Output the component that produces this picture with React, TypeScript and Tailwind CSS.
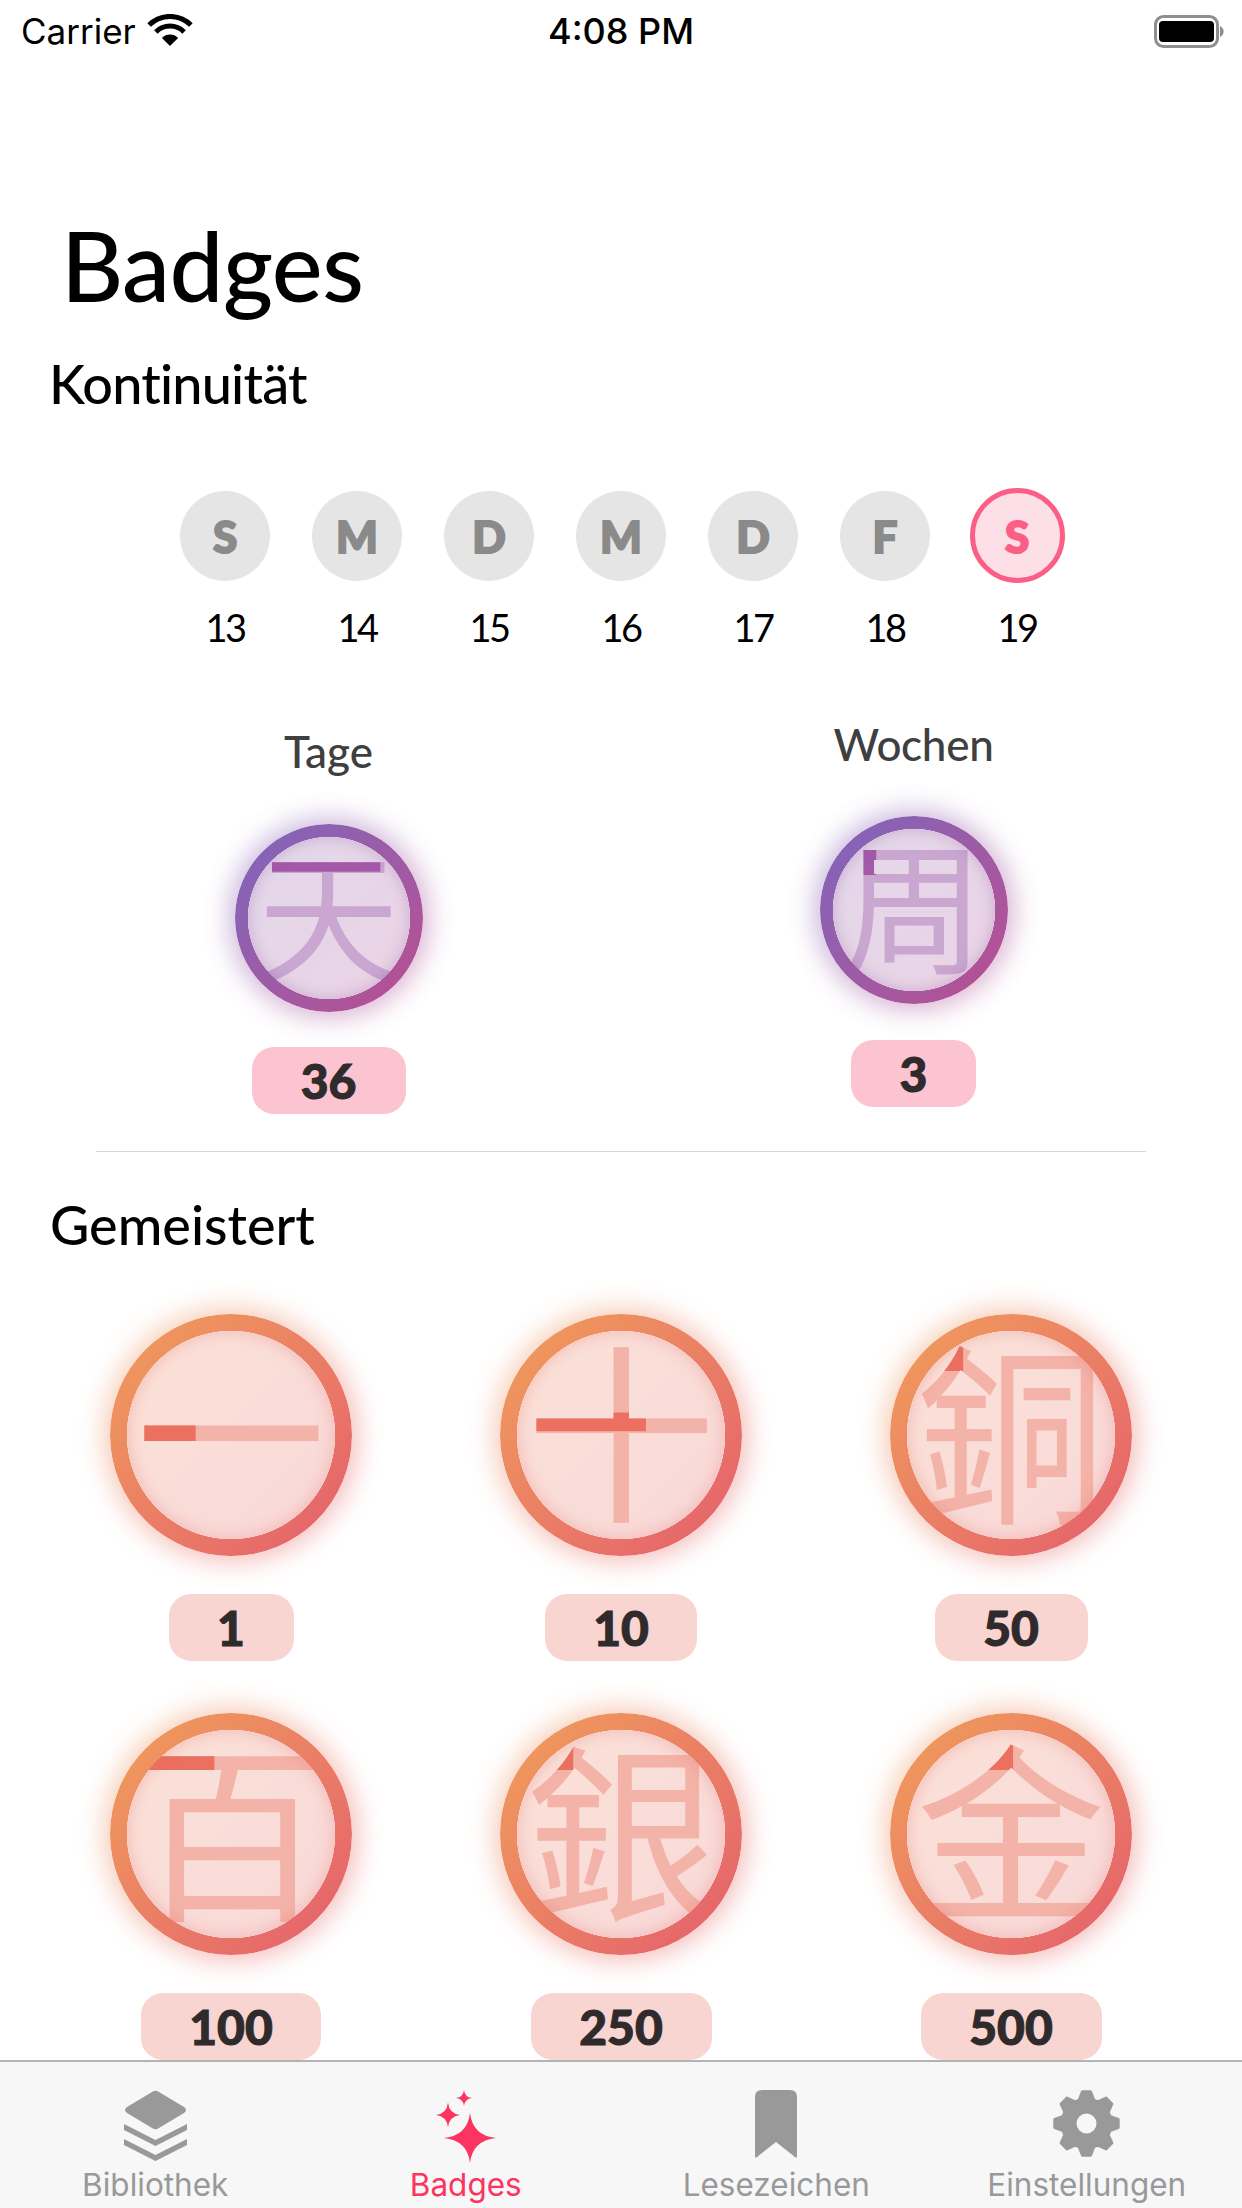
import React from 'react';

const days = [
  { letter: 'S', date: 13 },
  { letter: 'M', date: 14 },
  { letter: 'D', date: 15 },
  { letter: 'M', date: 16 },
  { letter: 'D', date: 17 },
  { letter: 'F', date: 18 },
  { letter: 'S', date: 19, today: true },
];

const mastered = [
  { glyph: '一', count: '1', pill: 'w-[125px]', first: '[clip-path:polygon(0_0,33%_0,33%_100%,0_100%)]' },
  { glyph: '十', count: '10', pill: 'w-[152px]', first: '[clip-path:polygon(0_44%,62%_44%,62%_53%,0_53%)]' },
  { glyph: '銅', count: '50', pill: 'w-[153px]', first: '[clip-path:polygon(10%_0,27%_0,27%_24%,10%_24%)]' },
  { glyph: '百', count: '100', pill: 'w-[180px]', first: '[clip-path:polygon(0_0,42%_0,42%_25%,0_25%)]' },
  { glyph: '銀', count: '250', pill: 'w-[181px]', first: '[clip-path:polygon(10%_0,27%_0,27%_24%,10%_24%)]' },
  { glyph: '金', count: '500', pill: 'w-[181px]', first: '[clip-path:polygon(30%_0,51%_0,51%_24%,30%_24%)]' },
];

function sparkle(cx: number, cy: number, rx: number, ry: number) {
  const kx = rx * 0.1;
  const ky = ry * 0.1;
  return `M${cx} ${cy - ry}Q${cx + kx} ${cy - ky} ${cx + rx} ${cy}Q${cx + kx} ${cy + ky} ${cx} ${cy + ry}Q${cx - kx} ${cy + ky} ${cx - rx} ${cy}Q${cx - kx} ${cy - ky} ${cx} ${cy - ry}Z`;
}

// eight toothed gear, tab bar settings icon
function gear(cx: number, cy: number, outer: number, root: number, hole: number) {
  let d = '';
  for (let i = 0; i < 8; i++) {
    const a = (i * Math.PI) / 4 - Math.PI / 2;
    const pts: [number, number][] = [
      [root, a - 0.3],
      [outer, a - 0.13],
      [outer, a + 0.13],
      [root, a + 0.3],
    ];
    pts.forEach(([r, t], j) => {
      const x = (cx + r * Math.cos(t)).toFixed(1);
      const y = (cy + r * Math.sin(t)).toFixed(1);
      d += `${i === 0 && j === 0 ? 'M' : 'L'}${x} ${y}`;
    });
  }
  d += `Z M${cx - hole} ${cy}a${hole} ${hole} 0 1 0 ${hole * 2} 0a${hole} ${hole} 0 1 0 ${-hole * 2} 0Z`;
  return d;
}

function StatusBar() {
  return (
    <div className="grid h-[60px] shrink-0 grid-cols-[1fr_auto_1fr] items-center px-[21px] pt-[2px] font-['Inter',sans-serif] text-[35px] leading-none text-black">
      <div className="flex items-center gap-[11px]">
        <span>Carrier</span>
        <svg width="46" height="32" viewBox="0 0 46 32" fill="none" className="-mt-[2px]">
          <path d="M23 32L14.9 23.9A11.5 11.5 0 0 1 31.1 23.9Z" fill="#000" />
          <path d="M8.9 17.9A20 20 0 0 1 37.1 17.9" stroke="#000" strokeWidth="5" />
          <path d="M2.1 11.1A29.5 29.5 0 0 1 43.9 11.1" stroke="#000" strokeWidth="5" />
        </svg>
      </div>
      <span className="text-[36px] font-medium">4:08 PM</span>
      <div className="flex justify-end">
        <svg width="72" height="33" viewBox="0 0 72 33" fill="none" className="-mr-[5px]">
          <rect x="1.5" y="1.5" width="62" height="30" rx="8" stroke="#8f8f8f" strokeWidth="3" />
          <rect x="5" y="6" width="55" height="21" rx="4" fill="#000" />
          <path d="M66 11a6 6 0 0 1 0 11Z" fill="#8f8f8f" />
        </svg>
      </div>
    </div>
  );
}

function Badge({
  glyph,
  first,
  size,
  variant,
}: {
  glyph: string;
  first: string;
  size: 'lg' | 'sm';
  variant: 'purple' | 'orange';
}) {
  const purple = variant === 'purple';
  const lg = size === 'lg';
  const gradient = purple
    ? 'bg-linear-to-br from-[#7c65bd] to-[#ba4c8f]'
    : 'bg-linear-to-br from-[#f09e59] to-[#e45d6c]';
  const glyphClass =
    "absolute inset-0 flex items-center justify-center font-['Noto_Sans_CJK_TC',sans-serif] font-normal leading-none " +
    (lg ? '-translate-y-[10px] text-[190px]' : '-translate-y-[9px] text-[142px]');

  return (
    <div className={lg ? 'relative h-[242px] w-[242px]' : 'relative h-[188px] w-[188px]'}>
      <div className={`absolute -inset-[6px] rounded-full opacity-45 blur-[13px] ${gradient}`} />
      <div
        className={
          purple
            ? 'absolute inset-0 rounded-full bg-linear-to-br from-[#e2d8eb] to-[#ebd3e4]'
            : 'absolute inset-0 rounded-full bg-linear-to-br from-[#fbe3d8] to-[#f8d7d8]'
        }
      />
      <div className={lg ? 'absolute inset-[17px]' : 'absolute inset-[13px]'}>
        <div className={`${glyphClass} ${purple ? 'text-[#c9a7d1]' : 'text-[#f4b3a8]'}`}>{glyph}</div>
        <div aria-hidden="true" className={`${glyphClass} ${first} ${purple ? 'text-[#a458a8]' : 'text-[#eb7060]'}`}>
          {glyph}
        </div>
        <div
          className={
            purple
              ? 'absolute inset-0 rounded-full shadow-[inset_0_0_14px_rgba(150,90,160,0.35)]'
              : 'absolute inset-0 rounded-full shadow-[inset_0_0_16px_rgba(228,110,110,0.35)]'
          }
        />
      </div>
      <div
        className={`absolute inset-0 rounded-full ${gradient} ${
          lg
            ? '[mask-image:radial-gradient(circle,transparent_104px,black_104.5px)]'
            : '[mask-image:radial-gradient(circle,transparent_81px,black_81.5px)]'
        }`}
      />
    </div>
  );
}

function Pill({ children, className }: { children: React.ReactNode; className: string }) {
  return (
    <div
      className={`flex h-[67px] items-center justify-center rounded-[22px] text-[48px] font-black leading-none text-[#2f2a2b] [-webkit-text-stroke:1px_currentColor] ${className}`}
    >
      {children}
    </div>
  );
}

function TabBar() {
  const label = 'mt-[3px] text-[31.5px] leading-[36px]';
  return (
    <div className="grid h-[148px] shrink-0 grid-cols-4 border-t-2 border-[#b3b3b3] bg-[#f7f7f7] pt-[28px] font-['Inter',sans-serif] text-[#999999]">
      <div className="flex flex-col items-center">
        <div className="flex h-[74px] items-start">
          <svg width="63" height="71" viewBox="0 0 63 71" fill="#999999">
            <path d="M28 2Q31.5 -0.5 35 2L60 17Q64 20 60 23L35 38Q31.5 40.5 28 38L3 23Q-1 20 3 17Z" />
            <path d="M0 34L31.5 50L63 34V40L31.5 56L0 40Z" />
            <path d="M0 49L31.5 65L63 49V55L31.5 71L0 55Z" />
          </svg>
        </div>
        <span className={label}>Bibliothek</span>
      </div>
      <div className="flex flex-col items-center text-[#fb3560]">
        <div className="flex h-[74px] items-start">
          <svg width="60" height="73" viewBox="0 0 60 73" fill="#fb3560">
            <path d={sparkle(34, 48, 26, 25)} />
            <path d={sparkle(12, 25, 12, 12.5)} />
            <path d={sparkle(28, 8, 8, 8)} />
          </svg>
        </div>
        <span className={label}>Badges</span>
      </div>
      <div className="flex flex-col items-center">
        <div className="flex h-[74px] items-start">
          <svg width="42" height="68" viewBox="0 0 42 68" fill="#999999">
            <path d="M7 0H35Q42 0 42 7V66Q42 69 40 67L21 52L2 67Q0 69 0 66V7Q0 0 7 0Z" />
          </svg>
        </div>
        <span className={label}>Lesezeichen</span>
      </div>
      <div className="flex flex-col items-center">
        <div className="flex h-[74px] items-start">
          <svg width="67" height="67" viewBox="0 0 67 67" fill="#999999" fillRule="evenodd">
            <path d={gear(33.5, 33.5, 32, 24.5, 11.5)} stroke="#999999" strokeWidth="3" strokeLinejoin="round" />
          </svg>
        </div>
        <span className={label}>Einstellungen</span>
      </div>
    </div>
  );
}

export default function App() {
  return (
    <div className="flex h-[2208px] w-[1242px] flex-col overflow-hidden bg-white font-['Lato',sans-serif] text-black">
      <StatusBar />

      <div className="min-h-0 flex-1 overflow-hidden">
        <h1 className="ml-[61px] mt-[157px] text-[96px] font-medium leading-[96px] tracking-[-0.5px]">Badges</h1>
        <h2 className="ml-[49px] mt-[44px] text-[54px] font-medium leading-[54px] tracking-[-0.8px]">Kontinuität</h2>

        <div className="mt-[77px] flex justify-center">
          {days.map((day) => (
            <div key={day.date} className="flex w-[132px] flex-col items-center">
              <div className="flex h-[95px] items-center">
                {day.today ? (
                  <div className="flex h-[95px] w-[95px] items-center justify-center rounded-full border-[5px] border-[#fc5f85] bg-[#fde0e7] text-[44px] font-black text-[#fc5f85] [-webkit-text-stroke:2px_currentColor]">
                    {day.letter}
                  </div>
                ) : (
                  <div className="flex h-[90px] w-[90px] items-center justify-center rounded-full bg-[#e5e5e5] text-[44px] font-black text-[#8a8a8a] [-webkit-text-stroke:2px_currentColor]">
                    {day.letter}
                  </div>
                )}
              </div>
              <div className="mt-[25px] text-[38px] leading-[38px] tracking-[-2.5px]">{day.date}</div>
            </div>
          ))}
        </div>

        <div className="mt-[76px] grid grid-cols-2 px-[36px] text-[#3f3f3f]">
          <div className="mt-[7px] flex flex-col items-center">
            <div className="text-[44px] font-medium leading-[44px]">Tage</div>
            <div className="mb-[35px] mt-[51px]">
              <Badge glyph="天" first="[clip-path:polygon(0_0,82%_0,82%_27%,0_27%)]" size="sm" variant="purple" />
            </div>
            <Pill className="w-[154px] bg-[#fcc3d0]">36</Pill>
          </div>
          <div className="flex flex-col items-center">
            <div className="text-[44px] font-medium leading-[44px] tracking-[-0.3px]">Wochen</div>
            <div className="mb-[36px] mt-[50px]">
              <Badge glyph="周" first="[clip-path:polygon(0_0,27%_0,27%_34%,0_34%)]" size="sm" variant="purple" />
            </div>
            <Pill className="w-[125px] bg-[#fcc3d0]">3</Pill>
          </div>
        </div>

        <div className="mx-[96px] mt-[37px] h-px bg-[#d6d6d6]" />

        <h2 className="ml-[50px] mt-[46px] text-[54px] font-medium leading-[54px]">Gemeistert</h2>

        <div className="mt-[62px] grid grid-cols-3 gap-y-[52px] px-[36px]">
          {mastered.map((item) => (
            <div key={item.count} className="flex flex-col items-center">
              <Badge glyph={item.glyph} first={item.first} size="lg" variant="orange" />
              <Pill className={`mt-[38px] bg-[#f8d5d0] ${item.pill}`}>{item.count}</Pill>
            </div>
          ))}
        </div>
      </div>

      <TabBar />
    </div>
  );
}
